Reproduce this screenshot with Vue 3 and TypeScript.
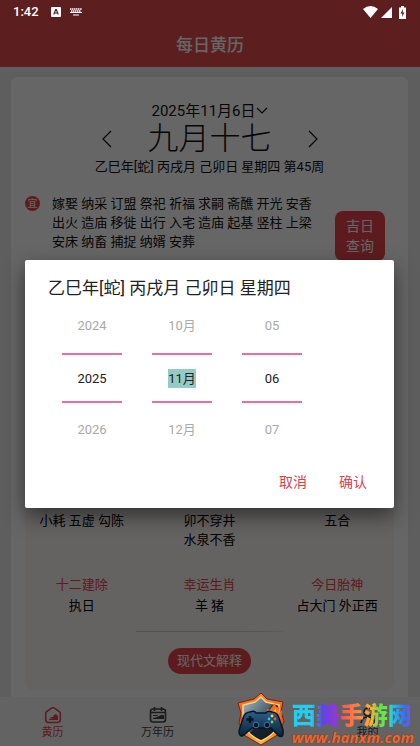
<script setup lang="ts">
import { ref } from 'vue'

interface PickerColumn {
  label: string
  values: [string, string, string]
}

interface Fact {
  title?: string
  lines: string[]
}

const lunarDate = '乙巳年[蛇] 丙戌月 己卯日 星期四'

const suitable = [
  '嫁娶 纳采 订盟 祭祀 祈福 求嗣 斋醮 开光 安香',
  '出火 造庙 移徙 出行 入宅 造庙 起基 竖柱 上梁',
  '安床 纳畜 捕捉 纳婿 安葬',
]

const columns: PickerColumn[] = [
  { label: 'year', values: ['2024', '2025', '2026'] },
  { label: 'month', values: ['10月', '11月', '12月'] },
  { label: 'day', values: ['05', '06', '07'] },
]

const upperFacts: Fact[] = [
  { lines: ['小耗 五虚 勾陈'] },
  { lines: ['卯不穿井', '水泉不香'] },
  { lines: ['五合'] },
]

const lowerFacts: Fact[] = [
  { title: '十二建除', lines: ['执日'] },
  { title: '幸运生肖', lines: ['羊 猪'] },
  { title: '今日胎神', lines: ['占大门 外正西'] },
]

const selectedColumn = ref('month')
</script>

<template>
  <div class="app">
    <header class="top-bar">
      <h1>每日黄历</h1>
    </header>

    <main class="content">
      <section class="card">
        <div class="date-head">
          <button class="arrow" type="button">
            <svg width="12" height="20" viewBox="0 0 12 20"><path d="M10 2 2 10l8 8" /></svg>
          </button>
          <div class="date-text">
            <button class="solar" type="button">
              2025年11月6日<svg width="12" height="8" viewBox="0 0 12 8"><path d="M1 1l5 5 5-5" /></svg>
            </button>
            <h2>九月十七</h2>
          </div>
          <button class="arrow" type="button">
            <svg width="12" height="20" viewBox="0 0 12 20"><path d="M2 2l8 8-8 8" /></svg>
          </button>
        </div>
        <p class="lunar">{{ lunarDate }} 第45周</p>

        <div class="advice">
          <span class="badge">宜</span>
          <div class="advice-lines">
            <p v-for="line in suitable" :key="line">{{ line }}</p>
          </div>
          <button class="lucky" type="button">吉日<br />查询</button>
        </div>

        <div class="panel">
          <div class="facts upper">
            <div v-for="(fact, i) in upperFacts" :key="i">
              <p v-for="line in fact.lines" :key="line">{{ line }}</p>
            </div>
          </div>
          <div class="facts lower">
            <div v-for="fact in lowerFacts" :key="fact.title">
              <h3>{{ fact.title }}</h3>
              <p v-for="line in fact.lines" :key="line">{{ line }}</p>
            </div>
          </div>
          <hr />
          <button class="explain" type="button">现代文解释</button>
        </div>
      </section>
    </main>

    <nav class="tabs">
      <a class="active" href="#today">
        <svg width="18" height="18" viewBox="0 0 18 18">
          <path class="line" d="M8 1.8Q9 1.1 10 1.8L15.4 5.6Q16.3 6.3 16.3 7.5V13.5Q16.3 16.5 13.3 16.5H4.7Q1.7 16.5 1.7 13.5V7.5Q1.7 6.3 2.6 5.6Z" />
          <path class="fill" d="M5 14v-1l4-1H6l1-1h2l1-2 2-1 2 2v4z" />
        </svg>
        <span>黄历</span>
      </a>
      <a href="#calendar">
        <svg width="18" height="18" viewBox="0 0 18 18">
          <rect class="line" x="1.5" y="3" width="15" height="13" rx="2.5" />
          <path class="line" d="M5.5 1v4M12.5 1v4M2 6.5h14" />
          <path class="fill" d="M4 9h5v1H4zM4 13v-1l4-1 2-1 2-1h3v4z" />
        </svg>
        <span>万年历</span>
      </a>
      <a class="mine" href="#mine">
        <svg width="18" height="18" viewBox="0 0 18 18">
          <circle class="line" cx="9" cy="6" r="4" />
          <path class="line" d="M2 17q1-6 7-6t7 6" />
        </svg>
        <span>我的</span>
      </a>
    </nav>

    <div class="scrim">
      <form class="dialog" role="dialog" @submit.prevent>
        <h2>{{ lunarDate }}</h2>
        <div class="picker">
          <div v-for="column in columns" :key="column.label" class="wheel">
            <button type="button">{{ column.values[0] }}</button>
            <div class="current">
              <button
                type="button"
                :class="{ selected: column.label === selectedColumn }"
                @click="selectedColumn = column.label"
              >{{ column.values[1] }}</button>
            </div>
            <button type="button">{{ column.values[2] }}</button>
          </div>
        </div>
        <div class="actions">
          <button type="button">取消</button>
          <button type="submit">确认</button>
        </div>
      </form>
    </div>

    <div class="status">
      <span>1:42</span>
      <svg width="10" height="10" viewBox="0 0 10 10">
        <rect width="10" height="10" rx="1" fill="#fff" />
        <path d="M2.8 7.5 4.7 2.5h.6l1.9 5M3.5 6h3" fill="none" stroke="#5d1e20" stroke-width="1.2" />
      </svg>
      <svg class="keyboard" width="12" height="8" viewBox="0 0 12 8">
        <path d="M0 1h12M1 3h10" stroke="#fff" stroke-width="1.3" stroke-dasharray="1.4 .5" />
        <path d="M0 4.5h12M3 7h6" stroke="#fff" stroke-width="1.2" />
      </svg>
      <i></i>
      <svg width="15" height="12" viewBox="0 0 15 12"><path d="M0 3Q7.5-3 15 3L7.5 12z" fill="#fff" /></svg>
      <svg width="11" height="12" viewBox="0 0 11 12"><path d="M11 1v11H0z" fill="#fff" /></svg>
      <svg class="battery" width="7" height="13" viewBox="0 0 7 13">
        <path d="M2 0h3v1.5h2V13H0V1.5h2z" fill="#fff" />
        <path d="M4 3 1.5 7.5H3.3L3 11 5.5 6.5H3.8z" fill="#5d1e20" />
      </svg>
    </div>

    <div class="mark">
      <svg class="shield" width="50" height="54" viewBox="0 0 50 54">
        <defs>
          <linearGradient id="fire" x1="0" y1="0" x2="0" y2="1">
            <stop offset="0" stop-color="#ff8a28" />
            <stop offset=".5" stop-color="#e8501c" />
            <stop offset="1" stop-color="#ffb52e" />
          </linearGradient>
          <linearGradient id="steel" x1="0" y1="0" x2="1" y2="1">
            <stop offset="0" stop-color="#a9bdca" />
            <stop offset=".48" stop-color="#4b6375" />
            <stop offset=".52" stop-color="#17222d" />
            <stop offset="1" stop-color="#101820" />
          </linearGradient>
          <linearGradient id="pad" x1="0" y1="0" x2="0" y2="1">
            <stop offset="0" stop-color="#28618c" />
            <stop offset="1" stop-color="#0d2238" />
          </linearGradient>
        </defs>
        <path d="M25 1 31 7 47 10 45 20 48 29 43 42 25 53 8 43 3 31 5 21 2 11 18 7z" fill="url(#fire)" stroke="#7c210d" />
        <path d="M25 5 30 10 43 13V29Q42 41 25 49 8 41 7 29V13L19 10z" fill="url(#steel)" stroke="#ffd07a" stroke-width="1.5" />
        <path d="M25 26Q31 22 31 17 34 19 35 16L40 10Q38 16 43 15L42 22 46 18 45 30H25z" fill="#ff6a18" />
        <path d="M29 26 34 19 35 22 40 16 41 28z" fill="#ffc238" />
        <path d="M14 20Q18 18 20 21H30Q32 18 36 20 41 20 43 26L47 38Q48 46 43 44L35 36H16L8 43Q3 46 3 39L7 26Q9 20 14 20z" fill="url(#pad)" stroke="#071522" stroke-width="1.5" />
        <path d="M14 24v7M10.5 27.5h7" stroke="#08121d" stroke-width="2.5" />
        <circle cx="20" cy="33" r="2.8" fill="#08121d" stroke="#3b79a5" />
        <circle cx="31" cy="33" r="2.8" fill="#08121d" stroke="#3b79a5" />
        <circle cx="36" cy="24" r="1.4" fill="#ffd33b" />
        <circle cx="39" cy="27" r="1.4" fill="#ff4b32" />
        <circle cx="33" cy="27" r="1.4" fill="#37bdf0" />
        <circle cx="36" cy="30" r="1.4" fill="#64d95b" />
      </svg>
      <div class="mark-text">
        <strong>西美手游网</strong>
        <em>www.hanxm.com</em>
      </div>
    </div>
  </div>
</template>

<style>
body {
  margin: 0;
}
</style>

<style scoped>
.app {
  position: relative;
  display: flex;
  flex-direction: column;
  min-height: 100vh;
  background: #ebebeb;
  color: #111;
  font: 400 13px/19px Roboto, "Noto Sans CJK SC", sans-serif;
}

h1, h2, h3, p {
  margin: 0;
  font-weight: inherit;
}

button {
  padding: 0;
  border: 0;
  background: none;
  color: inherit;
  font: inherit;
}

svg {
  display: block;
  flex: none;
}

.top-bar {
  padding: 32px 0 9px;
  background: #e84b50;
  color: #fff;
  text-align: center;
}

.top-bar h1 {
  font-size: 17px;
  line-height: 26px;
  font-weight: 500;
}

.content {
  display: flex;
  flex: 1;
  padding: 10px 12px 0 11px;
}

.card {
  display: flex;
  flex: 1;
  flex-direction: column;
  padding: 24px 14px 6px;
  border-radius: 6px 6px 0 0;
  background: #fff;
}

.date-head {
  display: flex;
  justify-content: center;
  align-items: flex-end;
  gap: 35px;
}

.date-text {
  text-align: center;
}

.solar {
  display: flex;
  align-items: center;
  justify-content: center;
  width: 100%;
  font-size: 15px;
  line-height: 20px;
}

.solar svg,
.arrow svg {
  fill: none;
  stroke: #111;
  stroke-width: 1.2;
}

.date-text h2 {
  font-size: 31px;
  line-height: 36px;
  font-weight: 300;
}

.arrow {
  padding-bottom: 8px;
}

.lunar {
  text-align: center;
}

.advice {
  display: flex;
  align-items: flex-start;
  margin-top: 18px;
}

.badge {
  width: 15px;
  margin-top: 2px;
  border-radius: 50%;
  background: #e8444e;
  color: #fff;
  font-size: 10px;
  line-height: 15px;
  text-align: center;
}

.advice-lines {
  flex: 1;
  margin-left: 12px;
  white-space: nowrap;
}

.lucky {
  width: 50px;
  margin: 17px 9px 0 0;
  padding: 5px 0;
  border-radius: 8px;
  background: #e8444e;
  color: #fff;
  font-size: 14px;
  line-height: 20px;
}

.panel {
  display: flex;
  flex-direction: column;
  align-items: center;
  padding: 250px 0 16px;
  border-radius: 8px;
  background: #fdf7f6;
  color: #000;
}

.facts {
  display: grid;
  grid-template-columns: repeat(3, 1fr);
  gap: 14px;
  width: 100%;
  text-align: center;
  white-space: nowrap;
}

.lower {
  margin-top: 25px;
}

.lower h3 {
  color: #e8444e;
  font-size: 13px;
  line-height: 22px;
}

hr {
  width: 40%;
  height: 1px;
  margin: 16px 0;
  border: 0;
  background: linear-gradient(90deg, #cfc8c4, #d6cfc9 80%, #eee6e2);
}

.explain {
  padding: 3px 9px 4px;
  border-radius: 13px;
  background: #e8444e;
  color: #fff;
}

.tabs {
  display: grid;
  grid-template-columns: repeat(4, 1fr);
  padding: 9px 0 4px;
  background: #f8f8f8;
}

.tabs a {
  display: flex;
  flex-direction: column;
  align-items: center;
  color: #444;
  font-size: 11px;
  line-height: 18px;
  text-decoration: none;
}

.tabs .active {
  color: #e8444e;
}

.tabs .mine {
  grid-column: 4;
}

.line {
  fill: none;
  stroke: currentColor;
  stroke-width: 1.6;
}

.fill {
  fill: currentColor;
}

.scrim {
  position: absolute;
  inset: 0;
  display: flex;
  align-items: center;
  padding: 22px 26px 0 25px;
  background: rgba(0, 0, 0, 0.6);
}

.dialog {
  flex: 1;
  padding: 16px 23px;
  border-radius: 2px;
  background: #fff;
  box-shadow: 0 8px 20px rgba(0, 0, 0, 0.5);
  color: #222;
}

.dialog h2 {
  font-size: 17px;
  line-height: 24px;
}

.picker {
  display: flex;
  gap: 30px;
  padding: 16px 14px 0;
}

.wheel {
  display: flex;
  flex-direction: column;
  width: 60px;
  color: #aaa;
}

.wheel > button {
  line-height: 20px;
}

.current {
  display: flex;
  align-items: center;
  justify-content: center;
  height: 46px;
  margin: 17px 0;
  border: solid #e8709b;
  border-width: 2px 0;
  color: #222;
}

.current .selected {
  background: #94cbc4;
}

.actions {
  display: flex;
  justify-content: flex-end;
  gap: 32px;
  padding: 32px 4px 0 0;
  color: #d8434e;
  font-size: 14px;
  line-height: 20px;
}

.status {
  position: absolute;
  inset: 0 0 auto;
  display: flex;
  align-items: center;
  padding: 1px 14px 0 13px;
  color: #fff;
  font-size: 13px;
  line-height: 22px;
  font-weight: 500;
}

.status span {
  margin-right: 12px;
}

.status i {
  flex: 1;
}

.status svg + svg {
  margin-left: 3px;
}

.status .keyboard.keyboard {
  margin-left: 9px;
}

.status .battery.battery {
  margin-left: 7px;
}

.mark {
  position: absolute;
  right: 6px;
  bottom: 0;
  display: flex;
  align-items: flex-end;
  gap: 6px;
}

.mark-text {
  display: flex;
  flex-direction: column;
}

.mark strong {
  background: linear-gradient(90deg, #22cdf0 0 16%, #3f8df4 20%, #5c43f2 25%, #a72bea 38%, #ff5a4a 42%, #ff9440 58%, #ffae2c 65%, #60e34d 72%, #7dde49 79%, #20c5ec 82%, #3273f4 92%, #963fe3);
  background-clip: text;
  color: transparent;
  font: 900 24px/28px "Noto Sans CJK SC", sans-serif;
}

.mark em {
  color: #f2642c;
  font: italic 700 15px/18px "Open Sans", sans-serif;
  text-shadow: 0 0 1px #5a2415;
}
</style>
